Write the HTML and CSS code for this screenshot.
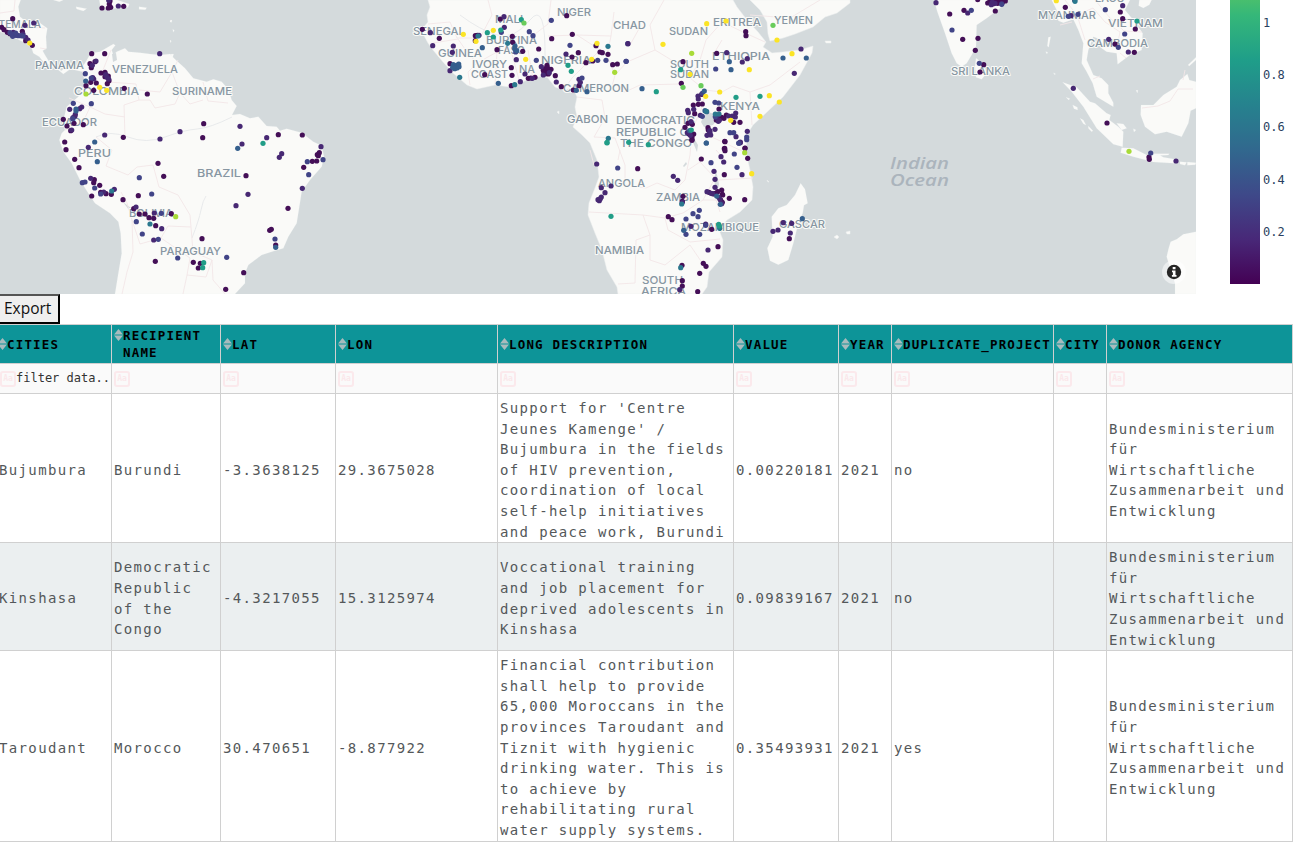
FILE: index.html
```html
<!DOCTYPE html>
<html lang="en">
<head>
<meta charset="utf-8">
<title>Projects map</title>
<link rel="stylesheet" href="styles.css">
</head>
<body>
<svg width="0" height="0" class="defs">
  <symbol id="sort" viewBox="0 0 9 12"><path d="M0 5.4 4.5 0 9 5.4ZM0 6.6h9L4.5 12Z"/></symbol>
</svg>
<section class="chart">
  <svg class="map" width="1196" height="294" viewBox="0 0 1196 294">
    <g class="land">
      <g transform="scale(.33333)">
        <path d="M0 0 62 0 55 20 60 50 75 62 110 62 142 85 138 110 140 145 128 152 135 165 150 190 165 203 185 212 205 190 225 195 245 205 262 178 272 160 300 155 340 132 346 136 335 150 340 165 350 155 375 145 385 155 420 158 450 162 480 165 510 162 525 178 555 205 580 235 620 245 640 238 665 245 685 268 695 300 710 318 696 345 720 342 750 355 775 350 800 378 830 380 840 392 860 386 905 398 940 425 965 437 972 470 965 500 930 540 905 575 898 620 890 670 865 710 850 745 815 755 785 765 745 795 735 820 735 850 705 882 345 882 355 820 365 760 362 700 355 665 330 640 285 610 265 580 240 540 215 490 190 455 178 420 185 400 195 390 188 370 200 320 235 290 255 250 248 215 225 210 210 208 190 222 175 210 150 195 130 185 118 170 100 160 95 145 75 128 40 112 0 95Z"/>
        <path d="M298 0 352 0 388 12 384 22 330 26 302 25ZM417 20 440 23 436 29 417 28ZM228 20 260 26 250 33 230 27ZM160 0 190 0 178 5ZM510 163 521 162 518 172ZM511 60l5 0-1 7-5-1ZM518 88l5 3-3 6ZM510 120l4 3-3 5Z"/>
      </g>
      <path d="M428 0 430 7 427 15 428 22 423 28 422 32 428 43 433 50 443 62 453 73 467 85 477 89 495 85 510 87 527 80 542 76 548 78 555 87 563 90 573 88 577 97 575 107 577 117 573 127 582 135 590 143 597 160 599 177 595 188 589 203 588 215 595 233 602 250 607 270 617 287 618 294 702 294 707 287 709 272 722 257 723 240 719 230 727 220 740 212 752 200 753 187 750 170 747 157 746 147 748 133 753 125 767 112 783 97 800 75 812 53 813 46 800 50 783 52 772 53 763 47 766 42 758 32 747 20 737 7 733 0Z"/>
      <path d="M750 0 760 10 767 22 768 34 770 41 783 38 795 34 813 27 825 17 837 13 850 3 850 0ZM825 41l6 0 0 2-5 0Z"/>
      <path d="m557 112 2-1 0 3ZM767 180l2 2-1 0ZM834 237l3-2 2 2-2 2ZM846 232l4-1 0 3-3 0Z"/>
      <path transform="translate(570 140) scale(.33333)" d="M692 130 705 148 713 190 702 196 698 220 685 250 670 310 655 360 625 374 600 362 592 325 608 290 605 230 625 205 650 195 675 165Z"/>
      <g transform="translate(900) scale(.33333)">
        <path d="M102 0 112 35 135 100 155 160 170 190 185 200 200 190 215 165 228 140 230 75 260 55 300 25 320 0ZM228 175 250 190 260 220 245 238 228 232 225 200Z"/>
        <path d="M455 0 470 30 475 62 490 68 520 58 535 90 550 130 545 190 560 215 578 250 590 290 640 320 640 308 625 280 625 255 605 235 580 225 560 180 565 150 580 110 600 118 605 145 620 155 650 160 653 193 690 165 725 150 728 100 700 60 675 30 690 0ZM718 0 755 0 748 14 730 24 716 17Z"/>
        <path d="M488 247 530 262 570 305 585 310 620 340 632 345 628 360 655 380 670 395 668 440 640 433 590 385 550 320 515 275ZM665 443 700 445 740 465 775 463 790 472 825 478 823 490 760 486 700 470 662 458ZM650 370 670 372 680 385 665 390ZM700 386 708 390 702 396ZM840 485 860 487 855 496 840 492ZM862 486 888 488 886 494 862 496ZM760 461 808 461 805 465 765 467Z"/>
        <path d="M723 315 760 315 790 285 830 260 840 240 862 222 868 240 888 245 888 325 872 332 865 370 845 410 800 395 765 403 735 380 722 345ZM864 195 888 172 888 180 868 198ZM445 112 452 110 446 142 442 138ZM437 155 443 156 441 162ZM460 218l6 3-1 4ZM498 292 510 296 506 300ZM518 315 532 322 533 330 522 326ZM540 355l10 5 8 15-8-4ZM565 378l14 14-4 3-10-10ZM708 271l6 0-2 8Z"/>
        <path d="M888 695 850 703 830 718 812 725 806 745 800 770 815 820 825 850 825 882 888 882Z"/>
      </g>
    </g>
    <g class="lake">
      <path d="M703 117 708 112 714 114 717 120 713 125 704 127 701 122ZM695 140 698 145 697 152 692 140ZM716 170 719 184 717 194 714 180ZM112 54 116 53 117 60 113 62ZM123 202 131 208 129 210ZM683 166 686 162 687 164 684 167Z"/>
    </g>
    <g class="rivers">
      <path d="M96 137Q110 130 128 137 T165 137 T197 129 T232 117M192 238Q199 220 201 210 T206 196M460 15Q480 30 497 35 T530 20 T545 60"/>
    </g>
    <g class="borders">
      <path d="M0 13 14 11 15 0M22 27 45 28M40 48 46 49M82 71 85 77M111 50 103 70 108 82 136 84 139 100 124 105 125 137M139 90 160 92 172 72 178 60M172 72 180 93 175 104 155 108 150 100 139 100M180 93 190 104 203 100M203 82 208 101 228 103M69 98 90 107 84 120 65 130M90 107 105 114 125 117M96 137 112 150 106 166 128 175 137 167 153 165 159 187 178 195 190 215 191 227 168 226 161 238 140 244 132 220 127 203 121 192M132 220 133 252 127 272 122 294M161 238 190 258 187 275 206 277 212 260 193 252 191 227M187 275 183 294M212 260 213 280 225 294"/>
      <path d="M428 24 450 22 457 38 480 38 492 15 488 0M433 43 458 39 467 52 477 63 468 72 470 85M477 63 497 52 511 49 535 34 548 24 551 0M497 52 495 85M512 54 519 80M528 50 533 79M548 36 577 35 611 36 614 12M577 35 600 50 585 65 572 78 565 88M611 36 607 55 615 75 627 62 655 50 650 25 664 0M655 50 678 64 700 60 706 40 722 22 743 32 765 42M700 60 690 78 705 90 722 92 733 86 750 92 770 85 800 62M750 92 752 125M615 75 611 90 625 92 640 85 680 84M577 97 602 100 605 118 594 137M594 137 615 138 625 165 625 185 646 188 657 183 675 190 685 180 690 155 692 130 703 105 705 90M594 165 590 150M620 150 618 160M589 212 643 215 650 235 636 240 635 283 618 284M643 215 665 218 683 213 703 200 716 200 720 212M665 218 668 230 690 242 720 239M650 235 650 260 665 265 690 245 707 270M703 133 742 151M718 180 753 178M703 200 715 178 700 162 688 170M716 150 725 160M640 27 630 45M713 55 722 40M750 15 790 18 820 0"/>
      <path d="M1065 0 1077 15 1085 40M1077 15 1093 8 1105 22 1120 32 1118 42 1100 44M1095 0 1110 18 1124 31 1142 32M1060 25 1072 22M1093 79 1100 76M1142 108 1158 106 1170 101 1178 89 1193 89M1183 80 1185 70M1120 53 1126 58"/>
    </g>
    <g id="labels" class="labels"></g>
    <g class="ocean"><text x="890" y="169" textLength="59" lengthAdjust="spacingAndGlyphs">Indian</text><text x="890" y="186" textLength="59" lengthAdjust="spacingAndGlyphs">Ocean</text></g>
    <g id="dots"></g>
    <circle cx="1174" cy="272" r="12" fill="#fff" fill-opacity=".5"/>
    <circle cx="1174" cy="272" r="7.2" fill="#262626"/>
    <path d="M1172.7 267h2.8v2.3h-2.8ZM1172 270.5h3.5v4.5h1v1.8h-4.6V275h1v-2.8h-.9Z" fill="#fff"/>
  </svg>
  <div class="colorbar"></div>
  <div class="ticks"><span>1</span><span>0.8</span><span>0.6</span><span>0.4</span><span>0.2</span></div>
</section>
<button class="export">Export</button>
<table class="data">
  <colgroup><col class="c1"><col class="c2"><col class="c3"><col class="c4"><col class="c5"><col class="c6"><col class="c7"><col class="c8"><col class="c9"><col class="c10"></colgroup>
  <thead>
    <tr class="head">
      <th><div><svg><use href="#sort"/></svg><span>CITIES</span></div></th>
      <th><div class="top"><svg><use href="#sort"/></svg><span>RECIPIENT NAME</span></div></th>
      <th><div><svg><use href="#sort"/></svg><span>LAT</span></div></th>
      <th><div><svg><use href="#sort"/></svg><span>LON</span></div></th>
      <th><div><svg><use href="#sort"/></svg><span>LONG DESCRIPTION</span></div></th>
      <th><div><svg><use href="#sort"/></svg><span>VALUE</span></div></th>
      <th><div><svg><use href="#sort"/></svg><span>YEAR</span></div></th>
      <th><div><svg><use href="#sort"/></svg><span>DUPLICATE_PROJECT</span></div></th>
      <th><div><svg><use href="#sort"/></svg><span>CITY</span></div></th>
      <th><div><svg><use href="#sort"/></svg><span>DONOR AGENCY</span></div></th>
    </tr>
    <tr class="filter">
      <td><div><i>Aa</i><span>filter data...</span></div></td>
      <td><i>Aa</i></td><td><i>Aa</i></td><td><i>Aa</i></td><td><i>Aa</i></td><td><i>Aa</i></td><td><i>Aa</i></td><td><i>Aa</i></td><td><i>Aa</i></td><td><i>Aa</i></td>
    </tr>
  </thead>
  <tbody>
    <tr class="r1"><td>Bujumbura</td><td>Burundi</td><td>-3.3638125</td><td>29.3675028</td><td>Support for 'Centre<br>Jeunes Kamenge' /<br>Bujumbura in the fields<br>of HIV prevention,<br>coordination of local<br>self-help initiatives<br>and peace work, Burundi</td><td>0.00220181</td><td>2021</td><td>no</td><td></td><td>Bundesministerium<br>für<br>Wirtschaftliche<br>Zusammenarbeit und<br>Entwicklung</td></tr>
    <tr class="r2"><td>Kinshasa</td><td>Democratic<br>Republic<br>of the<br>Congo</td><td>-4.3217055</td><td>15.3125974</td><td>Voccational training<br>and job placement for<br>deprived adolescents in<br>Kinshasa</td><td>0.09839167</td><td>2021</td><td>no</td><td></td><td>Bundesministerium<br>für<br>Wirtschaftliche<br>Zusammenarbeit und<br>Entwicklung</td></tr>
    <tr class="r3"><td>Taroudant</td><td>Morocco</td><td>30.470651</td><td>-8.877922</td><td>Financial contribution<br>shall help to provide<br>65,000 Moroccans in the<br>provinces Taroudant and<br>Tiznit with hygienic<br>drinking water. This is<br>to achieve by<br>rehabilitating rural<br>water supply systems.</td><td>0.35493931</td><td>2021</td><td>yes</td><td></td><td>Bundesministerium<br>für<br>Wirtschaftliche<br>Zusammenarbeit und<br>Entwicklung</td></tr>
  </tbody>
</table>
<script src="map.js"></script>
</body>
</html>
```

FILE: styles.css
```css
* { box-sizing: border-box; }
html, body { margin: 0; background: #fff; overflow: hidden; }
.defs { position: absolute; }

.chart { display: flex; height: 294px; }
.map { display: block; flex: none; background: #d4dadc; }
.land { fill: #fafaf8; stroke: #eef0f0; stroke-width: .5; }
.lake { fill: #d4dadc; }
.rivers, .borders { fill: none; stroke-linejoin: round; }
.rivers { stroke: #e3e6e8; stroke-width: .8; }
.borders { stroke: #f3e6e8; stroke-width: .9; }
.labels text { font: 500 11px Inter, sans-serif; fill: #8796a2; stroke: #fafaf8; stroke-width: 2px; paint-order: stroke; stroke-linejoin: round; }
.ocean text { font: italic 600 16px "Open Sans", sans-serif; fill: #abb4bc; }

.colorbar {
  flex: none; width: 30px; height: 284px; margin-left: 34px;
  background: linear-gradient(to top, #440154 0, #482878 44.7px, #3e4989 89.5px, #31688e 134.2px, #26828e 179px, #1f9e89 224px, #35b779 268.8px, #6ece58 313.5px);
}
.ticks { display: flex; flex-direction: column; margin: -3px 0 0 3px; font: 12px/52.2px "DejaVu Sans Mono", monospace; color: #2a3f5f; }
.ticks span { height: 52.2px; }

.export {
  display: block; width: 64px; height: 30px; margin-left: -4px; padding: 0 0 2px 6px;
  border: 2px outset #000; border-color: #555 #000 #000 #555; background: #efefef; color: #111;
  font: 15.5px "Open Sans", sans-serif; text-align: left;
}

.data { width: 1295px; margin-left: -3px; border-collapse: collapse; table-layout: fixed; font: 14px/20.6px "DejaVu Sans Mono", monospace; letter-spacing: 1.36px; color: #54585a; }
.c1 { width: 114px; } .c2 { width: 109px; } .c3 { width: 115px; } .c4 { width: 162px; } .c5 { width: 236px; }
.c6 { width: 105px; } .c7 { width: 53px; } .c8 { width: 162px; } .c9 { width: 53px; } .c10 { width: 186px; }
.data th, .data td { border: 1px solid #d0d0d0; padding: 0 0 0 2px; text-align: left; white-space: nowrap; overflow: hidden; }
.data tbody td { padding-top: 4px; }
.data tbody td:first-child { padding-left: 1px; }
.head { height: 39px; background: #0d9498; color: #000; font-size: 12.5px; line-height: 17px; letter-spacing: 1.17px; }
.head th { font-weight: 700; }
.head th:first-child { padding-left: 0; }
.head div { display: flex; align-items: center; height: 38px; }
.head svg { flex: none; width: 9px; height: 12px; fill: #a7bbbd; margin-bottom: 1px; }
.head .top { align-items: flex-start; padding-top: 2px; }
.head .top svg { margin-top: 2px; }
.head .top span { white-space: normal; }
.filter { height: 30px; background: #fafafa; font-size: 12px; letter-spacing: 0; color: #333; }
.filter div { display: flex; align-items: center; width: 109px; overflow: hidden; }
.filter i { display: block; flex: none; width: 16px; height: 16px; border: 1.5px solid #fbe9ec; border-width: 2px; border-radius: 3px; color: #fae8eb; font: 700 8px/12px "DejaVu Sans Mono", monospace; text-align: center; }
.r1 { height: 149px; }
.r2 { height: 108px; background: #ebeff0; }
.r3 { height: 190px; }
```

FILE: map.js
```js
const NS = 'http://www.w3.org/2000/svg';

// name, left, right, baseline
const labels = [
  ['GUATEMALA', -23, 41, 28], ['PANAMA', 35, 84, 69], ['VENEZUELA', 112, 178, 72.5], ['COLOMBIA', 74, 139, 95],
  ['SURINAME', 172, 232, 95], ['ECUADOR', 42, 97, 126], ['PERU', 78, 111, 157], ['BRAZIL', 197, 241, 177],
  ['BOLIVIA', 129, 173, 217], ['PARAGUAY', 160, 221, 255], ['SENEGAL', 413, 465, 35], ['MALI', 495, 523, 23],
  ['NIGER', 557, 591, 16], ['BURKINA', 486, 537, 44], ['FASO', 498, 525, 54], ['GUINEA', 438, 482, 57],
  ['IVORY', 472, 507, 67.5], ['COAST', 471, 508, 77.5], ['NA', 519, 535, 73], ['NIGERIA', 541, 591, 64],
  ['CHAD', 613, 646, 28.5], ['CAMEROON', 563, 629, 92], ['GABON', 567, 608, 123], ['SUDAN', 669, 708, 34.5],
  ['ERITREA', 713, 761, 25.5], ['YEMEN', 774, 813, 23.5], ['ETHIOPIA', 712, 770, 60], ['SOUTH', 670, 709, 68],
  ['SUDAN', 670, 709, 78], ['KENYA', 720, 760, 110], ['DEMOCRATIC', 616, 695, 124], ['REPUBLIC O', 616, 689, 136],
  ['THE CONGO', 620, 692, 147], ['ANGOLA', 598, 645, 186.5], ['ZAMBIA', 656, 700, 201], ['MOZAMBIQUE', 681, 759, 231],
  ['NAMIBIA', 595, 644, 253.5], ['SOUTH', 642, 683, 284], ['AFRICA', 641, 686, 295], ['GASCAR', 779, 825, 228],
  ['MYANMAR', 1038, 1096, 18.5], ['LAOS', 1095, 1124, 2], ['VIETNAM', 1108, 1163, 26.5],
  ['CAMBODIA', 1087, 1148, 46.5], ['SRI LANKA', 951, 1010, 75],
];
for (const [name, x1, x2, y] of labels) {
  const t = document.createElementNS(NS, 'text');
  t.setAttribute('x', x1);
  t.setAttribute('y', y);
  t.setAttribute('textLength', x2 - x1);
  t.setAttribute('lengthAdjust', 'spacingAndGlyphs');
  t.textContent = name;
  document.getElementById('labels').append(t);
}

const colors = { p: '#440f57', q: '#472873', b: '#414487', c: '#355f8d', t: '#2a788e', g: '#219d87', l: '#69cc5b', e: '#a8db38', y: '#fbe425' };

// Each region: origin in map pixels, then point pairs in thirds of a pixel, grouped by colour.
const regions = [
  { o: [0, 0],
    p: '38 56 5 82 12 89 22 97 30 101 67 94 77 122 97 136 330 3 328 12 332 22 325 24 306 24 371 19 275 161 314 161 270 191 274 203 285 185 303 219 315 217 325 228 327 242 322 251 289 249 272 247 258 257 281 271 373 265 442 282 315 230 190 358 222 370 201 378 250 374 212 392 194 426 198 449 224 478 370 412 608 413 611 371 474 490 491 529 237 503 283 539 281 548 299 556 275 588 302 577 318 581 334 583 369 599 415 587 401 626 418 642 435 642 461 655 447 653 467 677 514 641 606 716 466 784 580 787 601 790 595 804 731 818 677 868 907 405 958 458 952 464 955 467 937 484 950 483 911 502 738 527 864 625 809 691 814 688 835 404 827 735',
    q: '75 76 101 69 355 18 69 102 77 112 40 97 50 105 84 120 326 1 288 183 278 233 281 237 277 196 317 224 321 232 326 237 479 161 209 328 245 321 239 326 226 343 225 348 219 353 215 390 314 405 265 442 480 417 540 395 720 379 726 432 800 413 845 461 838 472 963 440 907 565 272 535 311 576 343 568 463 639 485 686 461 720 408 621 744 583 708 617',
    b: '30 98 36 104 43 103 48 106 55 107 63 107 69 108 38 109 47 99 256 221 274 234 220 310 274 311 218 356 247 548 255 546 284 564 302 582 418 533 455 582 409 665 427 702 475 718 484 640 533 774 680 772 922 485 969 479 926 524 825 717',
    c: '257 243 284 426 713 445 292 485 228 327 228 333 827 742', t: '335 573 450 672', g: '789 430 611 788 608 803', e: '258 282 527 650', y: '299 262 320 271 89 129' },
  { o: [400, 0],
    p: '67 88 118 115 226 107 226 122 232 106 291 149 301 57 500 47 455 116 517 103 535 158 516 171 416 147 368 154 338 127 337 109 334 203 336 226 150 191 254 224 334 257 385 235 392 234 405 232 466 227 484 260 588 137 600 156 607 158 624 163 578 183 558 188 638 194 652 192 430 211 436 206 440 213 447 209 453 208 445 222 432 217 441 196 442 203 437 221 520 270 537 257',
    q: '91 98 98 137 160 138 157 157 150 212 312 50 313 82 375 222 397 235 424 200 361 245 469 246 448 218 430 225 498 162 349 179 537 238 541 247 237 106',
    b: '454 61 388 95 399 107 510 136 409 181 593 181 618 181 683 131 678 184 546 234 347 156 304 97',
    c: '247 143 345 138 344 146 350 152 160 194 165 200 170 196 164 206 171 204 176 192 177 200 158 202 295 250 561 275 529 271', t: '323 130 344 254 624 139 179 232 234 108 625 415', g: '262 98 280 111 302 90 364 59 504 196 514 214 621 428', l: '372 69', e: '644 217', y: '190 103 280 91 377 178 575 178 591 130 228 124' },
  { o: [620, 0],
    p: '377 95 378 107 290 160 189 185 184 250 220 315 235 313 247 312 224 341 217 373 195 382 204 370 264 383 265 390 315 425 314 445 375 444 319 345 360 367 297 327 302 355 312 355 289 360 341 367 221 402 216 410 216 418 206 401 245 283 305 352',
    q: '320 158 382 176 367 186 24 131 543 147 523 220 234 288 235 297 203 331 221 328 205 338 241 346 202 398 211 406 272 405 261 406 285 388 270 396 268 402 348 410 361 428 382 394 347 339 346 351 337 348 326 348 295 364 291 347 213 365 290 353 298 361 269 392',
    b: '19 184 287 207 285 307 296 309 247 349 341 398 380 411 330 398 357 430 247 280 286 350',
    c: '489 174 559 174 328 185 333 209 66 266 253 273 259 429 255 332 260 335 209 392', t: '286 342 297 342 259 334', g: '109 275 348 292 420 289 26 427 85 434 182 209 214 390', l: '459 76 189 262 243 257', e: '215 160', y: '129 133 260 71 318 63 471 120 516 161 388 209 210 223 257 289 299 276 448 287 478 306 420 349 332 361' },
  { o: [570, 140],
    p: '203 86 394 57 366 1 464 4 463 26 465 32 525 25 533 55 463 104 339 169 337 184 457 163 455 150 436 160 432 162 452 180 457 187 443 155 417 157 478 175 524 179 336 376 400 370 408 379 389 400 444 320 425 268 337 422 337 438 383 455 306 239 295 230 658 296 458 165',
    q: '80 72 94 143 123 138 105 158 94 171 88 182 84 179 91 176 310 109 323 121 337 187 432 94 435 118 435 142 411 155 423 160 446 172 450 178 455 191 461 66 453 50 407 252 363 259 414 330 609 274 624 270 640 248 665 250 661 279 516 104 329 449 511 6 428 161',
    b: '143 84 423 68 493 42 501 82 388 211 369 221 384 230 348 237 407 256 389 283 348 283 530 -1 506 9',
    c: '409 9 341 271 451 193 440 168 697 236', t: '335 192 332 383 449 265', g: '111 8 123 229 446 253 448 258', e: '524 38', y: '545 101' },
  { o: [900, 0],
    p: '149 42 192 31 233 -1 188 118 226 151 234 115 286 33 263 9 272 9 279 3 288 1 294 5 301 3 307 7 316 3 287 6 270 4 280 11 293 10 251 194 240 216 661 36 668 56 706 87 645 132 703 157 524 0 496 22 621 369 747 471 748 478',
    q: '203 39 108 8 274 14 685 156 626 118 520 265 828 483 513 47 285 10 277 7 305 11 668 17',
    b: '156 90 214 31 305 13 238 190 534 43 616 29 674 102 655 142 752 459 505 49', t: '525 4', g: '711 63', e: '687 454', y: '469 2' },
];
for (const r of regions) {
  for (const key of Object.keys(colors)) {
    const n = (r[key] || '').split(' ').filter(Boolean).map(Number);
    for (let i = 0; i < n.length; i += 2) {
      const c = document.createElementNS(NS, 'circle');
      c.setAttribute('cx', (r.o[0] + n[i] / 3).toFixed(1));
      c.setAttribute('cy', (r.o[1] + n[i + 1] / 3).toFixed(1));
      c.setAttribute('r', 2.6);
      c.setAttribute('fill', colors[key]);
      document.getElementById('dots').append(c);
    }
  }
}
```
